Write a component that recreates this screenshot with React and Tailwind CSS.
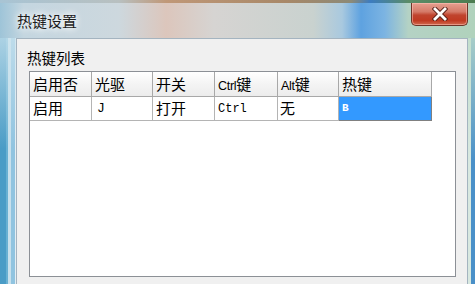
export default function App() {
  const cjk = "font-['Microsoft_YaHei','Noto_Sans_CJK_SC',sans-serif]";
  const mono = "font-['Liberation_Mono',monospace]";
  const widths = ["w-[62px]", "w-[61px]", "w-[62px]", "w-[63px]", "w-[61px]", "w-[93px]"];
  return (
    <div className="w-[475px] h-[284px] overflow-hidden flex flex-col bg-[linear-gradient(90deg,#9ec4d8_0%,#c4d6e0_5%,#cdd8de_25%,#dcc6bc_35%,#d6d4d2_45%,#c9d2cf_66%,#a9c9df_72%,#5ea2e0_76%,#7cb4e2_81%,#b4d2c4_86%,#b0d2bc_100%)]">
      <div className="h-[3px] bg-[linear-gradient(90deg,#a8c4d4_0%,#b8c0c0_25%,#c09878_35%,#a88868_60%,#8c8a78_74%,#3c7cc0_78%,#5a8c68_86%,#4c7c50_100%)]" />
      <div className="h-[35px] flex items-start">
        <div className={`${cjk} pl-[17px] pt-[8px] text-[15px] leading-[20px] text-[#1c1c1c] [text-shadow:0_0_6px_#ffffff,0_0_10px_#ffffff]`}>
          热键设置
        </div>
        <div className="ml-auto mr-[7px] w-[57px] h-[23px] rounded-b-[5px] border border-t-0 border-[#6e3428] bg-[linear-gradient(180deg,#e6a090_0%,#d47a68_40%,#c0442e_55%,#c03a22_80%,#d06a50_100%)] shadow-[inset_0_0_0_1px_rgba(255,200,190,0.5)] flex items-center justify-center">
          <svg width="16" height="14" viewBox="0 0 16 14">
            <path d="M3 2 L13 12 M13 2 L3 12" stroke="#5a2018" strokeWidth="4.6" strokeLinecap="square" />
            <path d="M3 2 L13 12 M13 2 L3 12" stroke="#ffffff" strokeWidth="2.8" strokeLinecap="square" />
          </svg>
        </div>
      </div>
      <div className="flex-1 flex">
        <div className="w-[16px] bg-[linear-gradient(180deg,rgba(205,228,238,0.75)_0%,rgba(205,228,238,0)_45%),linear-gradient(90deg,#4a9cc6_0px,#4a9cc6_6px,#68b0d2_6px,#68b0d2_8px,#c8e0ec_8px,#c8e0ec_11px,#90c4e0_11px,#90c4e0_15px,#e4eef4_15px)]" />
        <div className="flex-1 bg-[#f0f0f0] border-t border-l border-r border-[#a4b4c0] flex flex-col pl-[10px] pt-[9px]">
          <div className={`${cjk} h-[20px] text-[14.5px] leading-[20px] text-black`}>热键列表</div>
          <div className="ml-[2px] mt-[3px] w-[427px] h-[206px] border border-[#8c9096] bg-white flex flex-col">
            <div className="flex h-[25px]">
              {["启用否", "光驱", "开关", "Ctrl键", "Alt键", "热键"].map((t, i) => (
                <div
                  key={i}
                  className={`${widths[i]} h-full border-r border-b border-[#a8a8a8] bg-[linear-gradient(180deg,#ffffff_0%,#f4f4f4_50%,#ececec_100%)] pl-[3px] flex items-center ${cjk} text-[15px] text-black`}
                >
                  {t.startsWith("Ctrl") || t.startsWith("Alt") ? (
                    <span>
                      <span className="font-['Liberation_Sans',sans-serif] text-[12.5px] tracking-[-0.3px]">{t.slice(0, -1)}</span>
                      {t.slice(-1)}
                    </span>
                  ) : (
                    t
                  )}
                </div>
              ))}
            </div>
            <div className="flex h-[24px]">
              <div className={`${widths[0]} h-full border-r border-b border-[#b4b4b4] pl-[3px] flex items-center ${cjk} text-[15px]`}>启用</div>
              <div className={`${widths[1]} h-full border-r border-b border-[#b4b4b4] pl-[5px] flex items-center ${mono} text-[13px]`}>J</div>
              <div className={`${widths[2]} h-full border-r border-b border-[#b4b4b4] pl-[3px] flex items-center ${cjk} text-[15px]`}>打开</div>
              <div className={`${widths[3]} h-full border-r border-b border-[#b4b4b4] pl-[3px] flex items-center ${mono} text-[12px]`}>Ctrl</div>
              <div className={`${widths[4]} h-full border-r border-b border-[#b4b4b4] pl-[2px] flex items-center ${cjk} text-[15px]`}>无</div>
              <div className={`${widths[5]} h-full border-r border-b border-[#808080] bg-[#3399ff] pl-[3px] flex items-center ${mono} text-[11px] font-bold text-white`}>B</div>
            </div>
          </div>
        </div>
        <div className="w-[7px] bg-[linear-gradient(180deg,rgba(190,220,200,0.8)_0%,rgba(190,220,200,0)_50%),linear-gradient(90deg,#d8e8e0_0px,#d8e8e0_3px,#4a90c8_3px)]" />
      </div>
    </div>
  );
}
